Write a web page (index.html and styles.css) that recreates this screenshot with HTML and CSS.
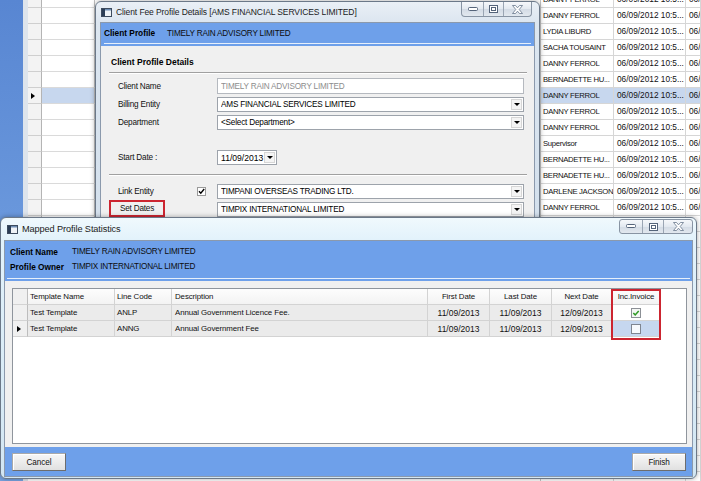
FILE: index.html
```html
<!DOCTYPE html>
<html>
<head>
<meta charset="utf-8">
<title>Mapped Profile Statistics</title>
<link rel="stylesheet" href="styles.css">
</head>
<body>
<div class="desktop">
  <div class="strip"></div>
  <div class="lgrid">
    <div class="lrow"><span class="rh"></span><span class="lc"></span></div>
    <div class="lrow"><span class="rh"></span><span class="lc"></span></div>
    <div class="lrow"><span class="rh"></span><span class="lc"></span></div>
    <div class="lrow"><span class="rh"></span><span class="lc"></span></div>
    <div class="lrow"><span class="rh"></span><span class="lc"></span></div>
    <div class="lrow"><span class="rh"></span><span class="lc"></span></div>
    <div class="lrow sel"><span class="rh"><i class="tri"></i></span><span class="lc"></span></div>
    <div class="lrow"><span class="rh"></span><span class="lc"></span></div>
    <div class="lrow"><span class="rh"></span><span class="lc"></span></div>
    <div class="lrow"><span class="rh"></span><span class="lc"></span></div>
    <div class="lrow"><span class="rh"></span><span class="lc"></span></div>
    <div class="lrow"><span class="rh"></span><span class="lc"></span></div>
    <div class="lrow"><span class="rh"></span><span class="lc"></span></div>
    <div class="lrow"><span class="rh"></span><span class="lc"></span></div>
    <div class="lrow"><span class="rh"></span><span class="lc"></span></div>
  </div>
  <div class="gap"></div>
  <div class="rgrid">
    <div class="rrow"><span>DANNY FERROL</span><span class="dt">06/09/2012 10:5...</span><span class="dt">06/09/2012 10:5...</span></div>
    <div class="rrow"><span>DANNY FERROL</span><span class="dt">06/09/2012 10:5...</span><span class="dt">06/09/2012 10:5...</span></div>
    <div class="rrow"><span>LYDIA LIBURD</span><span class="dt">06/09/2012 10:5...</span><span class="dt">06/09/2012 10:5...</span></div>
    <div class="rrow"><span>SACHA TOUSAINT</span><span class="dt">06/09/2012 10:5...</span><span class="dt">06/09/2012 10:5...</span></div>
    <div class="rrow"><span>DANNY FERROL</span><span class="dt">06/09/2012 10:5...</span><span class="dt">06/09/2012 10:5...</span></div>
    <div class="rrow"><span>BERNADETTE HU...</span><span class="dt">06/09/2012 10:5...</span><span class="dt">06/09/2012 10:5...</span></div>
    <div class="rrow sel"><span>DANNY FERROL</span><span class="dt">06/09/2012 10:5...</span><span class="dt">06/09/2012 10:5...</span></div>
    <div class="rrow"><span>DANNY FERROL</span><span class="dt">06/09/2012 10:5...</span><span class="dt">06/09/2012 10:5...</span></div>
    <div class="rrow"><span>DANNY FERROL</span><span class="dt">06/09/2012 10:5...</span><span class="dt">06/09/2012 10:5...</span></div>
    <div class="rrow"><span>Supervisor</span><span class="dt">06/09/2012 10:5...</span><span class="dt">06/09/2012 10:5...</span></div>
    <div class="rrow"><span>BERNADETTE HU...</span><span class="dt">06/09/2012 10:5...</span><span class="dt">06/09/2012 10:5...</span></div>
    <div class="rrow"><span>BERNADETTE HU...</span><span class="dt">06/09/2012 10:5...</span><span class="dt">06/09/2012 10:5...</span></div>
    <div class="rrow"><span>DARLENE JACKSON</span><span class="dt">06/09/2012 10:5...</span><span class="dt">06/09/2012 10:5...</span></div>
    <div class="rrow"><span>DANNY FERROL</span><span class="dt">06/09/2012 10:5...</span><span class="dt">06/09/2012 10:5...</span></div>
    <div class="rrow"><span></span><span></span><span></span></div>
    <div class="rrow"><span></span><span></span><span></span></div>
    <div class="rrow"><span></span><span></span><span></span></div>
    <div class="rrow"><span></span><span></span><span></span></div>
    <div class="rrow"><span></span><span></span><span></span></div>
    <div class="rrow"><span></span><span></span><span></span></div>
    <div class="rrow"><span></span><span></span><span></span></div>
    <div class="rrow"><span></span><span></span><span></span></div>
    <div class="rrow"><span></span><span></span><span></span></div>
    <div class="rrow"><span></span><span></span><span></span></div>
    <div class="rrow"><span></span><span></span><span></span></div>
    <div class="rrow"><span></span><span></span><span></span></div>
    <div class="rrow"><span></span><span></span><span></span></div>
    <div class="rrow"><span></span><span></span><span></span></div>
    <div class="rrow"><span></span><span></span><span></span></div>
    <div class="rrow"><span></span><span></span><span></span></div>
    <div class="rrow"><span></span><span></span><span></span></div>
  </div>
</div>

<div class="win win-top">
  <div class="titlebar">
    <svg class="appicon" width="11" height="9" viewBox="0 0 11 9"><rect x="0.5" y="0.5" width="10" height="8" fill="#eef2f6" stroke="#3d4b5e"/><rect x="1" y="1" width="3" height="7" fill="#2b3d55"/><rect x="4" y="1" width="6" height="1.5" fill="#6c8cb3"/></svg>
    <span class="title">Client Fee Profile Details [AMS FINANCIAL SERVICES LIMITED]</span>
    <div class="caps caps-top">
      <span class="cap cmin"><svg width="10" height="5" viewBox="0 0 10 5"><rect x="0.5" y="0.5" width="9" height="3" rx="1" fill="#fff" stroke="#55647a"/></svg></span>
      <span class="cap cmax"><svg width="9" height="8" viewBox="0 0 9 8"><rect x="0.5" y="0.5" width="8" height="7" fill="#fff" stroke="#55647a"/><rect x="2.5" y="2.5" width="4" height="3" fill="none" stroke="#55647a"/></svg></span>
      <span class="cap cclose"><svg width="11" height="9" viewBox="0 0 11 9"><path d="M0.5 0.5h3l2 2.3 2-2.3h3l-3.3 4 3.3 4h-3l-2-2.3-2 2.3h-3l3.3-4z" fill="#fff" stroke="#66768b" stroke-width="0.8"/></svg></span>
    </div>
  </div>
  <div class="client">
    <div class="bhdr"><div class="bhdr-in"><b class="hlabel">Client Profile</b><span class="hval">TIMELY RAIN ADVISORY LIMITED</span></div></div>
    <div class="fbody">
      <div class="sect">Client Profile Details</div>
      <div class="sep"></div>
      <div class="frow r1"><span class="lbl">Client Name</span><div class="field disabled"><span class="ftxt">TIMELY RAIN ADVISORY LIMITED</span></div></div>
      <div class="frow r2"><span class="lbl">Billing Entity</span><div class="field"><span class="ftxt">AMS FINANCIAL SERVICES LIMITED</span><span class="arr"><i></i></span></div></div>
      <div class="frow r2"><span class="lbl">Department</span><div class="field"><span class="ftxt">&lt;Select Department&gt;</span><span class="arr"><i></i></span></div></div>
      <div class="frow r4"><span class="lbl">Start Date :</span><div class="field date"><span class="ftxt dtxt">11/09/2013</span><span class="arr"><i></i></span></div></div>
      <div class="sep sep2"></div>
      <div class="frow r5"><span class="lbl lnk"><span class="lt">Link Entity</span><svg class="chk" width="9" height="9" viewBox="0 0 9 9"><rect x="0.5" y="0.5" width="8" height="8" fill="#fff" stroke="#9a9a9a"/><path d="M2 4.2l1.8 2L7.2 2" fill="none" stroke="#000" stroke-width="1.4"/></svg></span><div class="field"><span class="ftxt">TIMPANI OVERSEAS TRADING LTD.</span><span class="arr"><i></i></span></div></div>
      <div class="frow r2"><span class="lbl"><span class="setd">Set Dates</span></span><div class="field"><span class="ftxt">TIMPIX INTERNATIONAL LIMITED</span><span class="arr"><i></i></span></div></div>
    </div>
  </div>
</div>

<div class="win win-bottom">
  <div class="titlebar tb2">
    <svg class="appicon" width="11" height="9" viewBox="0 0 11 9"><rect x="0.5" y="0.5" width="10" height="8" fill="#eef2f6" stroke="#3d4b5e"/><rect x="1" y="1" width="3" height="7" fill="#2b3d55"/><rect x="4" y="1" width="6" height="1.5" fill="#6c8cb3"/></svg>
    <span class="title">Mapped Profile Statistics</span>
    <div class="caps caps-bot">
      <span class="cap cmin"><svg width="10" height="5" viewBox="0 0 10 5"><rect x="0.5" y="0.5" width="9" height="3" rx="1" fill="#fff" stroke="#55647a"/></svg></span>
      <span class="cap cmax"><svg width="9" height="8" viewBox="0 0 9 8"><rect x="0.5" y="0.5" width="8" height="7" fill="#fff" stroke="#55647a"/><rect x="2.5" y="2.5" width="4" height="3" fill="none" stroke="#55647a"/></svg></span>
      <span class="cap cclose"><svg width="11" height="9" viewBox="0 0 11 9"><path d="M0.5 0.5h3l2 2.3 2-2.3h3l-3.3 4 3.3 4h-3l-2-2.3-2 2.3h-3l3.3-4z" fill="#fff" stroke="#66768b" stroke-width="0.8"/></svg></span>
    </div>
  </div>
  <div class="client client2">
    <div class="bhdr2"><div class="bhdr2-in">
      <div class="hrow"><b class="hlabel2">Client Name</b><span class="hval">TIMELY RAIN ADVISORY LIMITED</span></div>
      <div class="hrow"><b class="hlabel2">Profile Owner</b><span class="hval">TIMPIX INTERNATIONAL LIMITED</span></div>
    </div></div>
    <div class="gbody">
      <div class="tbl">
        <div class="trow thead">
          <span class="rh"></span>
          <span>Template Name</span>
          <span>Line Code</span>
          <span class="desc">Description</span>
          <span class="ctr">First Date</span>
          <span class="ctr">Last Date</span>
          <span class="ctr">Next Date</span>
          <span class="ctr">Inc.Invoice</span>
        </div>
        <div class="trow tdata">
          <span class="rh"></span>
          <span>Test Template</span>
          <span>ANLP</span>
          <span class="desc">Annual Government Licence Fee.</span>
          <span class="ctr dt">11/09/2013</span>
          <span class="ctr dt">11/09/2013</span>
          <span class="ctr dt">12/09/2013</span>
          <span class="ctr inc"><svg width="10" height="10" viewBox="0 0 10 10"><rect x="0.5" y="0.5" width="9" height="9" fill="#f4f7f4" stroke="#8c9096"/><path d="M2.3 5l1.9 1.9L7.7 3" fill="none" stroke="#2e9a24" stroke-width="1.5"/></svg></span>
        </div>
        <div class="trow tdata">
          <span class="rh"><i class="tri"></i></span>
          <span>Test Template</span>
          <span>ANNG</span>
          <span class="desc">Annual Government Fee</span>
          <span class="ctr dt">11/09/2013</span>
          <span class="ctr dt">11/09/2013</span>
          <span class="ctr dt">12/09/2013</span>
          <span class="ctr inc selcell"><svg width="10" height="10" viewBox="0 0 10 10"><rect x="0.5" y="0.5" width="9" height="9" fill="#f7f9fc" stroke="#7f8590"/></svg></span>
        </div>
        <div class="redbox"></div>
      </div>
    </div>
    <div class="bfoot">
      <button class="btn">Cancel</button>
      <button class="btn">Finish</button>
    </div>
  </div>
</div>
</body>
</html>
```

FILE: styles.css
```css
* { box-sizing: border-box; margin: 0; padding: 0; }
html, body { width: 701px; height: 481px; overflow: hidden; }
body {
  position: relative;
  background: #fff;
  color: #000;
  font-family: "Liberation Sans", Arial, sans-serif;
  font-size: 8.2px;
  letter-spacing: -0.2px;
}

/* ---------- background application ---------- */
.desktop { display: flex; height: 481px; }
.strip { width: 23px; flex: none; background: linear-gradient(180deg, #5886d2, #6b99dd 50%, #77a3e1); }
.lgrid {
  width: 72px; flex: none; margin-top: -8px;
  border-left: 5px solid #dde4ec; background: #fff;
  display: flex; flex-direction: column;
}
.lrow { display: flex; height: 16px; flex: none; }
.lrow .rh {
  width: 14px; background: #f3f3f3;
  border-right: 1px solid #b4b4b4; border-bottom: 1px solid #cfcfcf;
  display: flex; align-items: center; padding-left: 3px;
}
.lrow .lc { flex: 1; border-bottom: 1px solid #dadada; border-right: 1px solid #c0c0c0; }
.lrow.sel .lc { background: #c7d7ee; }
.tri {
  display: block; width: 0; height: 0;
  border-left: 4px solid #000; border-top: 3.5px solid transparent; border-bottom: 3.5px solid transparent;
}
.gap { flex: 1; }
.rgrid { width: 161px; flex: none; margin-top: -8px; display: flex; flex-direction: column; border-left: 1px solid #c4c4c4; }
.rrow { display: grid; grid-template-columns: 73px 72px 1fr; height: 16px; flex: none; }
.rrow span {
  border-right: 1px solid #d6d6d6; border-bottom: 1px solid #d6d6d6;
  padding-left: 2px; line-height: 15px; white-space: nowrap; overflow: hidden;
  font-size: 7.7px; letter-spacing: -0.3px; color: #111;
}
.rrow span.dt { font-size: 8.3px; letter-spacing: 0; padding-left: 3px; }
.rrow.sel span { background: #c7d7ee; }

/* ---------- windows ---------- */
.win {
  position: absolute;
  border: 1px solid #6b7888;
  box-shadow: 0 0 5px rgba(0, 0, 0, 0.35);
}
.win-top {
  left: 95px; top: 1px; width: 445px; height: 250px;
  border-radius: 6px 6px 0 0;
  padding: 0 4px;
  background: linear-gradient(180deg, #eaf0f6, #dce6f0 20px, #d2dfec);
}
.win-bottom {
  left: 0; top: 217px; width: 697px; height: 262px;
  border-radius: 6px;
  padding: 0 3px;
  background: linear-gradient(180deg, #f0f9fd, #e2f2fb 22px, #d2e6f3);
}
.titlebar { height: 20px; display: flex; align-items: center; padding-left: 1px; }
.tb2 { height: 22px; padding-left: 3px; }
.appicon { flex: none; }
.title { margin-left: 4px; font-size: 8.5px; letter-spacing: -0.1px; color: #1b1b1b; white-space: nowrap; }
.tb2 .title { margin-left: 4px; font-size: 9.2px; letter-spacing: -0.1px; }
.caps {
  margin-left: auto; align-self: flex-start; display: flex;
  border: 1px solid #8894a3; border-top: none; border-radius: 0 0 4px 4px;
  background: linear-gradient(180deg, #f6f8fb, #e3e9f0 50%, #d3dbe5 51%, #e2e8ef);
  overflow: hidden;
}
.caps-top { height: 15px; margin-right: 3px; }
.caps-bot { height: 15px; margin-top: 1px; border-top: 1px solid #8894a3; border-radius: 3px; }
.cap { display: flex; align-items: center; justify-content: center; border-right: 1px solid #9aa5b3; }
.cap:last-child { border-right: none; }
.caps-top .cmin { width: 22px; } .caps-top .cmax { width: 20px; } .caps-top .cclose { width: 27px; }
.caps-bot .cmin { width: 23px; } .caps-bot .cmax { width: 21px; } .caps-bot .cclose { width: 28px; }

.client { background: #f0f0f0; border: 1px solid #8b99ac; border-bottom: none; }
.client2 { border: 1px solid #8b99ac; height: 237px; display: flex; flex-direction: column; }

/* ---------- top dialog ---------- */
.bhdr { background: #6ea0ea; padding: 0 3px 2px; height: 23px; }
.bhdr-in { height: 21px; border-bottom: 1px solid #e6effb; display: flex; align-items: center; }
.hlabel { width: 63px; font-size: 8.3px; letter-spacing: 0; }
.hval { white-space: nowrap; color: #0d0d0d; }
.fbody { padding: 10px 7px 0 10px; }
.sect { font-weight: bold; font-size: 8.5px; letter-spacing: 0; line-height: 12px; }
.sep { margin: 4px 0 0 -2px; height: 2px; border-top: 1px solid #a0a0a0; border-bottom: 1px solid #fff; }
.sep2 { margin-top: 9px; }
.frow { display: grid; grid-template-columns: 99px 307px; padding-left: 7px; height: 15px; margin-top: 3px; }
.frow.r1 { height: 16px; margin-top: 4px; }
.frow.r4 { margin-top: 20px; }
.frow.r5 { margin-top: 8px; }
.lbl { display: flex; align-items: center; white-space: nowrap; color: #111; }
.lnk .lt { width: 79px; }
.chk { flex: none; }
.setd {
  margin-left: -9px; margin-top: -2px; width: 56px; height: 17px;
  border: 2px solid #cc2530; display: flex; align-items: center; justify-content: center;
}
.field {
  border: 1px solid #9da3ab; background: #fff;
  display: flex; align-items: center; padding-left: 3px; min-width: 0;
}
.ftxt { flex: 1; white-space: nowrap; overflow: hidden; }
.disabled { border-color: #b5b9bf; color: #8d8d8d; }
.date { width: 60px; }
.dtxt { font-size: 8.6px; letter-spacing: 0; }
.arr {
  width: 11px; height: 11px; margin-right: 1px; flex: none;
  display: flex; align-items: center; justify-content: center;
  background: #f4f4f4; border: 1px solid #d6d6d6;
}
.arr i {
  display: block; width: 0; height: 0;
  border-left: 3px solid transparent; border-right: 3px solid transparent; border-top: 3px solid #000;
}

/* ---------- bottom dialog ---------- */
.bhdr2 { background: #6ea0ea; padding: 3px 2px 2px; flex: none; }
.bhdr2-in { border-bottom: 1px solid #e6effb; padding: 0 3px 4px; }
.hrow { display: flex; align-items: center; height: 15px; }
.hlabel2 { width: 62px; font-size: 8.3px; letter-spacing: 0; white-space: nowrap; }
.gbody { flex: 1; background: #f0f0f0; padding: 7px 5px 3px 7px; display: flex; }
.tbl { position: relative; flex: 1; border: 1px solid #8f959d; background: #fff; }
.trow { display: grid; grid-template-columns: 15px 87px 57px 256px 62px 62px 60px 49px; height: 16px; }
.trow span {
  border-right: 1px solid #d3d3d3; border-bottom: 1px solid #d3d3d3;
  display: flex; align-items: center; padding-left: 2px; white-space: nowrap; overflow: hidden;
  font-size: 7.9px; letter-spacing: -0.1px; color: #111;
}
.trow span.desc { padding-left: 3px; }
.trow span.ctr { justify-content: center; padding-left: 0; }
.trow span.dt { font-size: 8.5px; letter-spacing: 0; }
.thead span { background: linear-gradient(180deg, #fdfdfd, #f3f3f3); }
.tdata span { background: #ebebeb; }
.tdata span.inc { background: #fff; }
.tdata span.selcell { background: #c6d7ef; }
.trow span.rh { padding-left: 4px; background: #f0f0f0; border-right-color: #bdbdbd; }
.redbox {
  position: absolute; left: 598px; top: 0; width: 50px; height: 51px;
  border: 2px solid #cc2530;
}
.bfoot {
  flex: none; height: 29px; background: #6ea0ea;
  display: flex; justify-content: space-between; align-items: flex-start;
  padding: 6px 6px 0 7px;
}
.btn {
  height: 18px; width: 54px;
  font-family: "Liberation Sans", Arial, sans-serif; font-size: 8.2px; letter-spacing: -0.1px; color: #111;
  background: linear-gradient(180deg, #f7f7f7, #ececec 50%, #e0e0e0);
  border: 1px solid #6d6d6d; border-top-color: #a9a9a9; border-left-color: #a9a9a9;
  box-shadow: inset 1px 1px 0 #fff;
}
```
